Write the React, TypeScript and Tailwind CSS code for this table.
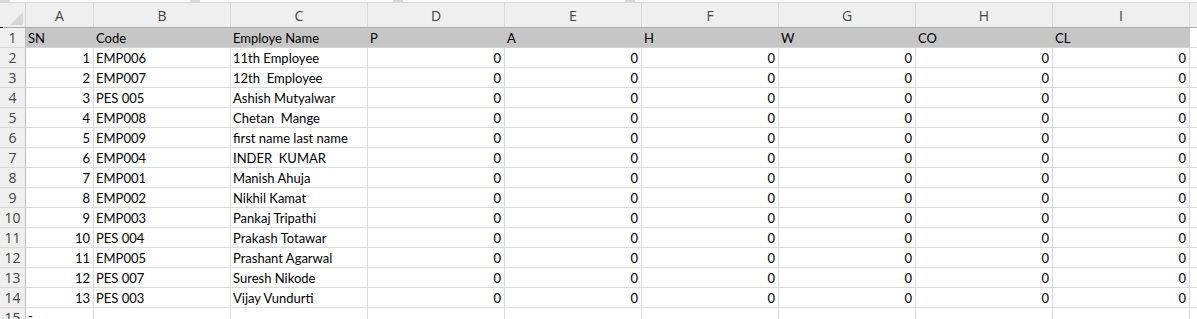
import React from "react";

const cols = ["A", "B", "C", "D", "E", "F", "G", "H", "I"];
const widths = [68, 137, 137, 137, 137, 137, 137, 137, 137];

const data: [string, string, string][] = [
  ["1", "EMP006", "11th Employee"],
  ["2", "EMP007", "12th  Employee"],
  ["3", "PES 005", "Ashish Mutyalwar"],
  ["4", "EMP008", "Chetan  Mange"],
  ["5", "EMP009", "first name last name"],
  ["6", "EMP004", "INDER  KUMAR"],
  ["7", "EMP001", "Manish Ahuja"],
  ["8", "EMP002", "Nikhil Kamat"],
  ["9", "EMP003", "Pankaj Tripathi"],
  ["10", "PES 004", "Prakash Totawar"],
  ["11", "EMP005", "Prashant Agarwal"],
  ["12", "PES 007", "Suresh Nikode"],
  ["13", "PES 003", "Vijay Vundurti"],
];

const headers = ["SN", "Code", "Employe Name", "P", "A", "H", "W", "CO", "CL"];

const cellFont = { fontFamily: "Lato, 'Liberation Sans', sans-serif" };
const hdrFont = { fontFamily: "'Open Sans', 'Noto Sans', sans-serif" };

function RowHeader({ n }: { n: number }) {
  return (
    <div
      className="w-[26px] shrink-0 h-[20px] bg-[#efefef] border-r border-r-[#bdbdbd] border-b border-b-[#d9d9d9] flex items-end justify-center pb-[1px] text-[14px] leading-[16px] text-[#444]"
      style={hdrFont}
    >
      {n}
    </div>
  );
}

export default function App() {
  return (
    <div className="w-[1197px] h-[319px] overflow-hidden bg-white">
      {/* top strip */}
      <div className="h-[3px] bg-[#d8d8d8] flex">
        <div className="ml-[10px] w-[180px] h-[2px] bg-[#fbfbfb]" />
        <div className="ml-[10px] w-[193px] h-[2px] bg-[#fbfbfb]" />
        <div className="ml-[10px] w-[222px] h-[2px] bg-[#fbfbfb]" />
        <div className="ml-[10px] flex-1 h-[2px] bg-[#fbfbfb]" />
      </div>
      {/* column header */}
      <div className="flex h-[25px] bg-[#efefef] border-b border-b-[#ababab]">
        <div className="relative w-[26px] shrink-0 border-r border-r-[#d4d4d4]">
          <svg className="absolute left-[10px] top-[9px]" width="13" height="13" viewBox="0 0 13 13">
            <polygon points="13,0 13,13 0,13" fill="#d6d6d6" />
          </svg>
          <div className="absolute left-0 bottom-[-1px] w-[3px] h-[1px] bg-black" />
        </div>
        {cols.map((c, i) => (
          <div
            key={c}
            className="shrink-0 border-r border-r-[#d9d9d9] flex items-center justify-center text-[14px] text-[#444]"
            style={{ ...hdrFont, width: widths[i] }}
          >
            {c}
          </div>
        ))}
        <div className="flex-1" />
      </div>
      {/* row 1 */}
      <div className="flex">
        <RowHeader n={1} />
        {headers.map((h, i) => (
          <div
            key={i}
            className="shrink-0 h-[20px] bg-[#c6c6c6] border-b border-b-[#d4d4d4] pl-[2px] flex items-end pb-[1px] text-[13px] leading-[16px] text-black"
            style={{ ...cellFont, width: widths[i] }}
          >
            {h}
          </div>
        ))}
        <div className="flex-1 h-[20px] border-b border-b-[#d9d9d9]" />
      </div>
      {data.map((r, ri) => (
        <div key={ri} className="flex">
          <RowHeader n={ri + 2} />
          {widths.map((w, ci) => {
            const v = ci === 0 ? r[0] : ci === 1 ? r[1] : ci === 2 ? r[2] : "0";
            const right = ci === 0 || ci >= 3;
            return (
              <div
                key={ci}
                className={`shrink-0 h-[20px] border-r border-r-[#dadada] border-b border-b-[#dadada] flex items-end pb-[1px] text-[13px] leading-[16px] text-black whitespace-pre ${
                  right ? "justify-end pr-[3px]" : "pl-[2px]"
                }`}
                style={{ ...cellFont, width: w }}
              >
                {v}
              </div>
            );
          })}
          <div className="flex-1 h-[20px] border-b border-b-[#dadada]" />
        </div>
      ))}
      <div className="flex">
        <RowHeader n={15} />
        {widths.map((w, ci) => (
          <div
            key={ci}
            className="shrink-0 h-[20px] border-r border-r-[#dadada] border-b border-b-[#dadada] text-[13px] pl-[2px] leading-[16px]"
            style={{ ...cellFont, width: w }}
          >
            {ci === 0 ? "-" : ""}
          </div>
        ))}
        <div className="flex-1" />
      </div>
    </div>
  );
}
